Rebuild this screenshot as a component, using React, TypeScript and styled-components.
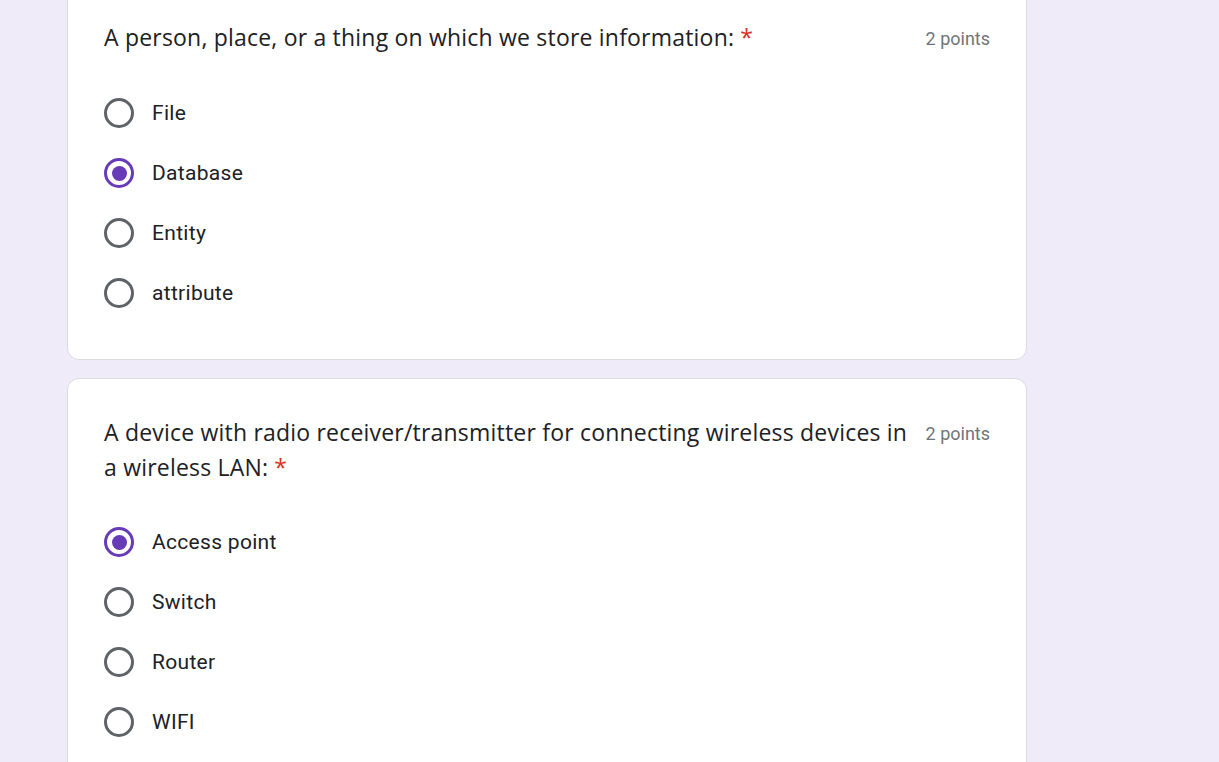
import styled, { createGlobalStyle } from 'styled-components';

const GlobalStyle = createGlobalStyle`
  html, body {
    margin: 0;
    padding: 0;
    background: #f0ebf8;
    height: 100%;
    overflow: hidden;
  }
  body {
    font-family: Roboto, "Liberation Sans", Arial, sans-serif;
    color: #202124;
  }
`;

const Page = styled.div`
  padding-left: 67px;
  margin-top: -17px;
  display: flex;
  flex-direction: column;
  gap: 18px;
`;

const Card = styled.div`
  width: 960px;
  box-sizing: border-box;
  background: #fff;
  border: 1px solid #dadce0;
  border-radius: 12px;
  padding: 36px;
`;

const Header = styled.div`
  display: flex;
  align-items: flex-start;
  gap: 14px;
`;

const Question = styled.div`
  flex: 1;
  font-family: "Open Sans", "Noto Sans", sans-serif;
  font-size: 23px;
  line-height: 35px;
  letter-spacing: 0.2px;
  color: #202124;
`;

const Required = styled.span`
  color: #d93025;
  margin-left: 6px;
`;

const Points = styled.div`
  font-family: Roboto, "Liberation Sans", sans-serif;
  font-size: 18px;
  line-height: 35px;
  color: #70757a;
  white-space: nowrap;
  padding-top: 1px;
`;

const Options = styled.div`
  margin-top: 27px;
  display: flex;
  flex-direction: column;
`;

const Option = styled.label`
  display: flex;
  align-items: center;
  height: 60px;
  gap: 18px;
`;

const Radio = styled.span<{ $checked?: boolean }>`
  width: 30px;
  height: 30px;
  box-sizing: border-box;
  border-radius: 50%;
  border: 3px solid ${p => (p.$checked ? '#673ab7' : '#5f6368')};
  display: flex;
  align-items: center;
  justify-content: center;
  flex-shrink: 0;

  &::after {
    content: '';
    display: ${p => (p.$checked ? 'block' : 'none')};
    width: 15px;
    height: 15px;
    border-radius: 50%;
    background: #673ab7;
  }
`;

const Label = styled.span`
  font-family: Roboto, "Liberation Sans", sans-serif;
  font-size: 21px;
  letter-spacing: 0.3px;
  color: #202124;
`;

type Q = { text: string; options: string[]; selected: number };

const questions: Q[] = [
  {
    text: 'A person, place, or a thing on which we store information:',
    options: ['File', 'Database', 'Entity', 'attribute'],
    selected: 1,
  },
  {
    text: 'A device with radio receiver/transmitter for connecting wireless devices in a wireless LAN:',
    options: ['Access point', 'Switch', 'Router', 'WIFI'],
    selected: 0,
  },
];

export default function App() {
  return (
    <>
      <GlobalStyle />
      <Page>
        {questions.map((q, i) => (
          <Card key={i}>
            <Header>
              <Question>
                {q.text}
                <Required>*</Required>
              </Question>
              <Points>2 points</Points>
            </Header>
            <Options>
              {q.options.map((o, j) => (
                <Option key={o}>
                  <Radio $checked={j === q.selected} />
                  <Label>{o}</Label>
                </Option>
              ))}
            </Options>
          </Card>
        ))}
      </Page>
    </>
  );
}
